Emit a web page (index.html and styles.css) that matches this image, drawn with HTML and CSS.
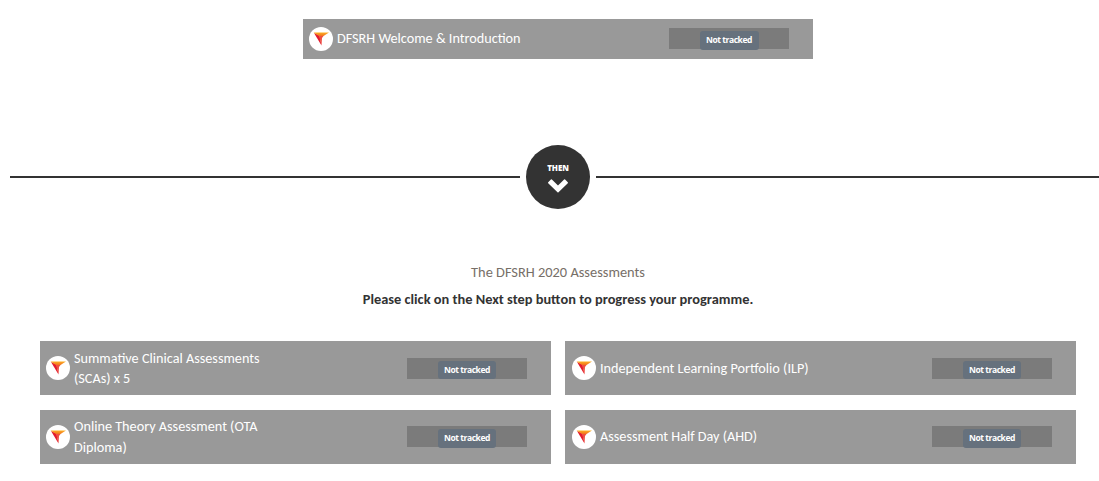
FILE: index.html
```html
<!DOCTYPE html>
<html lang="en">
<head>
  <meta charset="utf-8">
  <title>DFSRH Programme</title>
  <link rel="stylesheet" href="styles.css">
</head>
<body>
  <svg class="defs" width="0" height="0">
    <defs>
      <linearGradient id="top" x1="0" x2="0" y1="0" y2="1">
        <stop offset="0" stop-color="#fdb022"/>
        <stop offset="1" stop-color="#f0701f"/>
      </linearGradient>
      <symbol id="logo" viewBox="0 0 24 24">
        <circle cx="12" cy="12" r="12" fill="#fff"/>
        <path d="M5 6L10.500 8.500L12.500 18.500Z" fill="#e31b2e"/>
        <path d="M10 8.500L14.500 9L13 11L12.500 18.500Z" fill="#ee5040"/>
        <path d="M4.500 5.500H20L14.500 9H10Z" fill="url(#top)"/>
      </symbol>
    </defs>
  </svg>
  <div class="programme">
    <!--first set-->
    <div class="course intro">
      <svg class="logo"><use href="#logo"/></svg>
      <a class="title">DFSRH Welcome &amp; Introduction</a>
      <div class="progress"><span class="badge">Not tracked</span></div>
    </div>
    <!--next set operator-->
    <div class="operator">
      <div class="circle">
        <span>THEN</span>
        <svg width="22" height="15" viewBox="0 0 22 15"><path d="M1.200 4.200L3.900 1.400Q4.400 1 4.900 1.400L11 7.400L17.100 1.400Q17.600 1 18.100 1.400L20.800 4.200Q21.200 4.700 20.800 5.200L11.500 14.200Q11 14.600 10.500 14.200L1.200 5.200Q0.800 4.700 1.200 4.200Z" fill="#fff"/></svg>
      </div>
    </div>
    <!--assessments-->
    <h3>The DFSRH 2020 Assessments</h3>
    <p>Please click on the Next step button to progress your programme.</p>
    <div class="courses">
      <div class="course">
        <svg class="logo"><use href="#logo"/></svg>
        <a class="title">Summative Clinical Assessments (SCAs) x 5</a>
        <div class="progress"><span class="badge">Not tracked</span></div>
      </div>
      <div class="course">
        <svg class="logo"><use href="#logo"/></svg>
        <a class="title wide">Independent Learning Portfolio (ILP)</a>
        <div class="progress"><span class="badge">Not tracked</span></div>
      </div>
      <div class="course last">
        <svg class="logo"><use href="#logo"/></svg>
        <a class="title">Online Theory Assessment (OTA Diploma)</a>
        <div class="progress"><span class="badge">Not tracked</span></div>
      </div>
      <div class="course last">
        <svg class="logo"><use href="#logo"/></svg>
        <a class="title">Assessment Half Day (AHD)</a>
        <div class="progress"><span class="badge">Not tracked</span></div>
      </div>
    </div>
  </div>
</body>
</html>
```
FILE: styles.css
```css
html, body {
  margin: 0;
  padding: 0;
  height: 481px;
  overflow: hidden;
  background-color: #fff;
}
body {
  font-family: Calibri, Carlito, Lato, "Open Sans", sans-serif;
  font-size: 14.22px;
  color: #333;
}
.defs {
  position: absolute;
}
.programme {
  width: 1096px;
  margin-left: 10px;
  padding-top: 19px;
}
.course {
  display: flex;
  align-items: center;
  box-sizing: border-box;
  height: 54px;
  padding: 0 24px 0 6px;
  background-color: #999;
}
.courses .course:nth-child(even) {
  padding-left: 7px;
}
.intro {
  width: 510px;
  height: 40px;
  margin: 0 auto;
}
.logo {
  width: 24px;
  height: 24px;
  margin-right: 4px;
  flex: none;
}
.title {
  width: 190px;
  color: #fff;
  line-height: 20.5px;
}
.intro .title, .last .title {
  margin-bottom: 1px;
}
.wide {
  width: 230px;
}
.progress {
  width: 120px;
  height: 21px;
  margin-left: auto;
  background-color: #7b7b7b;
  text-align: center;
  display: flex;
  justify-content: center;
}
.intro .progress, .last .progress {
  margin-bottom: 2px;
}
.badge {
  box-sizing: border-box;
  width: 58px;
  height: 18px;
  margin-top: 3px;
  border-radius: 3px;
  background-color: #66717d;
  color: #fff;
  font: 700 8.5px/18px "Open Sans", sans-serif;
  letter-spacing: -0.45px;
}
.intro .badge, .last .badge {
  height: 19px;
}
.intro .badge {
  width: 59px;
}
.operator {
  display: flex;
  align-items: center;
  height: 64px;
  margin-top: 86px;
}
.operator:before, .operator:after {
  content: "";
  flex: 1;
  height: 2px;
  background-color: #333;
}
.circle {
  width: 64px;
  height: 64px;
  margin: 0 6px;
  border-radius: 50%;
  background-color: #333;
  color: #fff;
  display: flex;
  flex-direction: column;
  align-items: center;
}
.circle span {
  margin-top: 17px;
  font: 800 8px/12px "Open Sans", sans-serif;
  letter-spacing: -0.1px;
}
.circle svg {
  margin-top: 4px;
}
h3, p {
  margin: 0;
  text-align: center;
  line-height: 20px;
  font-size: 14.4px;
}
h3 {
  margin-top: 53px;
  font-weight: normal;
  color: #776f68;
}
p {
  margin-top: 7px;
  font-weight: bold;
}
.courses {
  display: grid;
  grid-template-columns: 511px 511px;
  gap: 15px 14px;
  margin: 32px 30px 0;
}
```
